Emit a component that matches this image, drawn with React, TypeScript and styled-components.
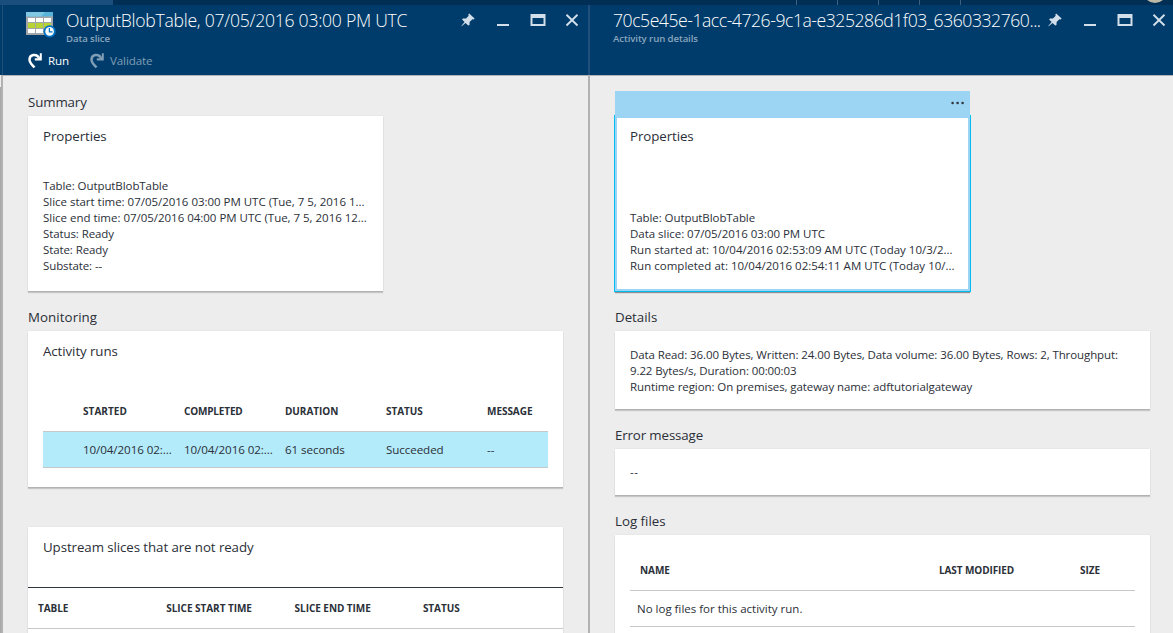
import React from 'react';
import styled, { createGlobalStyle } from 'styled-components';

const GlobalStyle = createGlobalStyle`
  * { box-sizing: border-box; }
  body {
    margin: 0;
    overflow: hidden;
    background: #ededed;
    color: #2b2f38;
    font-family: 'Open Sans', 'Noto Sans', sans-serif;
  }
`;

const Page = styled.div`
  width: 1173px;
  height: 633px;
  display: flex;
  flex-direction: column;
  overflow: hidden;
`;

const TopStrip = styled.div`
  flex: none;
  height: 5px;
  display: flex;
  background: #002e55;
  overflow: hidden;
`;
const StripActive = styled.div`
  flex: none;
  width: 113px;
  margin-right: 683px;
  background: #1a4f7d;
`;
const StripSlot = styled.div`
  flex: none;
  width: 41px;
  border-left: 1px solid #3f6180;
`;
const Avatar = styled.div`
  width: 24px;
  height: 24px;
  flex: none;
  margin: -21px 0 0 142px;
  border-radius: 50%;
  background: #bcbaa6;
`;

const Blades = styled.div`
  flex: 1;
  display: flex;
  min-height: 0;
`;

const PreviousEdge = styled.div`
  flex: none;
  width: 3px;
  display: flex;
  flex-direction: column;
`;
const EdgeHead = styled.div`
  height: 70px;
  background: #003c6b;
  border-right: 1px solid #1f5079;
`;
const EdgeGap = styled.div`
  height: 12px;
  background: #ededed;
  border-right: 2px solid #b2b2b2;
`;
const EdgeTrack = styled.div`
  flex: 1;
  background: #a9a9a9;
  border-right: 2px solid #b2b2b2;
`;

const BladeFrame = styled.section`
  flex: none;
  width: 587px;
  display: flex;
  flex-direction: column;
`;
const Header = styled.header`
  flex: none;
  height: 70px;
  display: flex;
  flex-direction: column;
  background: #003c6b;
  border-right: 2px solid #1f4f7a;
`;
const TitleBar = styled.div`
  display: flex;
  height: 43px;
  padding-left: 23px;
`;
const SliceIcon = styled.svg`
  flex: none;
  width: 30px;
  height: 27px;
  margin: 7px 10px 0 0;
`;
const Titles = styled.div<{ $width: number }>`
  flex: none;
  width: ${p => p.$width}px;
  white-space: nowrap;
`;
const Title = styled.h1<{ $track: number }>`
  margin: 2px 0 0;
  height: 26px;
  font-size: 17.6px;
  line-height: 26px;
  font-weight: 350;
  letter-spacing: ${p => p.$track}px;
  color: #fff;
`;
const Subtitle = styled.div`
  font-size: 9.6px;
  line-height: 12px;
  font-weight: 600;
  letter-spacing: -0.08px;
  color: #8ba6be;
`;
const Controls = styled.svg`
  flex: none;
  width: 118px;
  height: 14px;
  margin-top: 8px;
`;
const Commands = styled.div`
  display: flex;
  padding-left: 24px;
`;
const Command = styled.div<{ $disabled?: boolean; $width: number }>`
  width: ${p => p.$width}px;
  display: flex;
  align-items: center;
  gap: 5px;
  height: 25px;
  font-size: 11.6px;
  letter-spacing: -0.12px;
  color: ${p => (p.$disabled ? '#7f9db5' : '#fff')};
`;
const CommandIcon = styled.svg`
  width: 16px;
  height: 17px;
  margin-top: -1px;
`;

const Body = styled.div`
  flex: 1;
  min-height: 0;
  overflow: hidden;
  padding: 15px 0 0 25px;
  border-top: 1px solid #b0b4b8;
  border-right: 2px solid #b2b2b2;
  background: #ededed;
`;
const SectionLabel = styled.h2<{ $track?: number }>`
  margin: 16px 0 4px;
  height: 20px;
  font-size: 13.3px;
  line-height: 20px;
  font-weight: 400;
  letter-spacing: ${p => p.$track ?? 0}px;
  &:first-child { margin-top: 1px; }
`;
const Card = styled.div<{ $width?: number; $height: number }>`
  width: ${p => p.$width ?? 535}px;
  height: ${p => p.$height}px;
  background: #fff;
  box-shadow: 0 1px 0 #b2b2b2, 0 2px 1px rgba(0, 0, 0, 0.16), 0 0 1px rgba(0, 0, 0, 0.12);
  padding: 0 15px;
  display: flex;
  flex-direction: column;
`;
const SpacedCard = styled(Card)`
  margin-top: 40px;
  padding: 0;
`;
const CardTitle = styled.h3<{ $inset?: number; $top?: number }>`
  margin: ${p => p.$top ?? 10}px 0 0 ${p => p.$inset ?? 0}px;
  font-size: 13.3px;
  line-height: 20px;
  font-weight: 400;
  letter-spacing: -0.08px;
`;
const Lines = styled.div<{ $bottom: number }>`
  margin-top: auto;
  padding-bottom: ${p => p.$bottom}px;
`;
const Line = styled.div<{ $track?: number }>`
  height: 16px;
  font-size: 11.5px;
  line-height: 16px;
  white-space: nowrap;
  letter-spacing: ${p => p.$track ?? -0.1}px;
`;

const SelectedBar = styled.div`
  position: relative;
  z-index: 1;
  width: 355px;
  height: 27px;
  display: flex;
  justify-content: flex-end;
  background: #9cd4f3;
`;
const Dots = styled.svg`
  width: 14px;
  height: 4px;
  margin: 10px 5px 0 0;
`;
const SelectedCard = styled(Card)`
  margin-top: -2px;
  padding: 0 13px;
  border: 2px solid #9cd4f3;
  box-shadow: 0 0 0 1px #00bcf2, 0 2px 1px rgba(0, 0, 0, 0.4);
`;

const HeadRow = styled.div<{ $cols: string; $height: number }>`
  flex: none;
  display: grid;
  grid-template-columns: ${p => p.$cols};
  height: ${p => p.$height}px;
  align-items: center;
  border-bottom: 1px solid #c8c8c8;
`;
const HeadCell = styled.div<{ $track?: number }>`
  padding-left: 10px;
  font-size: 10px;
  line-height: 14px;
  font-weight: 700;
  letter-spacing: ${p => p.$track ?? -0.05}px;
  white-space: nowrap;
`;
const SelectedRow = styled.div<{ $cols: string }>`
  flex: none;
  display: grid;
  grid-template-columns: ${p => p.$cols};
  height: 36px;
  align-items: center;
  background: #b3ebfb;
  border-bottom: 1px solid #c3c9cb;
`;
const Cell = styled.div`
  padding-left: 10px;
  font-size: 11.6px;
  line-height: 16px;
  letter-spacing: -0.08px;
  white-space: nowrap;
`;
const RunsTable = styled.div`
  margin-top: 30px;
`;
const UpstreamTable = styled.div`
  margin-top: 30px;
  border-top: 1px solid #32363f;
`;
const LogTable = styled.div`
  margin-top: 15px;
`;
const EmptyRow = styled.div`
  height: 36px;
  padding-left: 7px;
  border-bottom: 1px solid #c8c8c8;
  font-size: 11.5px;
  line-height: 36px;
`;

const runCols = '30px repeat(4, 101px) 1fr';
const upstreamCols = 'repeat(3, 128.3px) 1fr';
const logCols = '299px 141px 1fr';

const WindowControls = () => (
  <Controls viewBox="0 0 118 14">
    <g fill="#d2dfea">
      <path d="M8.2 1 L13.6 6 L12.6 7 L11.4 6.6 L8.6 9.3 L8.5 12.4 L7.3 13 L4.6 10.4 L0.6 13.6 L0.3 13.3 L3.6 9.4 L1.1 6.9 L1.9 5.9 L5 5.9 L7.7 3.2 L7.3 1.9 Z" transform="translate(0 -0.4)" />
      <rect x="36" y="11" width="12" height="2" />
      <path d="M69.5 1 h15 v12 h-15 z M71.5 5 v6 h11 v-6 z" fillRule="evenodd" />
    </g>
    <path d="M105.5 1.7 L116.5 12.5 M116.5 1.7 L105.5 12.5" stroke="#d2dfea" strokeWidth="1.9" fill="none" />
  </Controls>
);

const RedoIcon = () => (
  <CommandIcon viewBox="0 0 16 17">
    <path d="M11.8 5.6 C9.2 1.4 2.7 2.4 2.5 7.6 C2.4 10.7 4.6 12.2 7.6 15.4" fill="none" stroke="currentColor" strokeWidth="2.5" />
    <path d="M14.8 1.2 V8.4 H7.8 V6.2 H11 L12.8 4.4 V1.2 Z" fill="currentColor" />
  </CommandIcon>
);

export default function App() {
  return (
    <Page>
      <GlobalStyle />
      <TopStrip>
        <StripActive />
        <StripSlot /><StripSlot /><StripSlot /><StripSlot /><StripSlot />
        <Avatar />
      </TopStrip>
      <Blades>
        <PreviousEdge>
          <EdgeHead />
          <EdgeGap />
          <EdgeTrack />
        </PreviousEdge>

        <BladeFrame>
          <Header>
            <TitleBar>
              <SliceIcon viewBox="0 0 30 27">
                <rect x="0" y="0" width="27" height="23" rx="0.6" fill="#a3a6a8" />
                <rect x="0" y="0" width="27" height="4.4" fill="#59b4d9" />
                <path d="M0 0 H19 L15 4.4 H0 Z" fill="#7fc7e3" />
                <g fill="#fff">
                  <rect x="2" y="6" width="7" height="4" /><rect x="10" y="6" width="7" height="4" /><rect x="18" y="6" width="7" height="4" />
                  <rect x="2" y="17" width="7" height="4" /><rect x="10" y="17" width="7" height="4" />
                </g>
                <g fill="#b8d432">
                  <rect x="2" y="11" width="7" height="5" /><rect x="10" y="11" width="7" height="5" /><rect x="18" y="11" width="7" height="5" />
                </g>
                <circle cx="23.6" cy="19.4" r="6.1" fill="#0072c6" />
                <circle cx="23.6" cy="19.4" r="4.3" fill="#fff" />
                <path d="M23.4 16 V19.8 H26.6" fill="none" stroke="#0072c6" strokeWidth="1.3" />
              </SliceIcon>
              <Titles $width={395}>
                <Title $track={-0.27}>OutputBlobTable, 07/05/2016 03:00 PM UTC</Title>
                <Subtitle>Data slice</Subtitle>
              </Titles>
              <WindowControls />
            </TitleBar>
            <Commands>
              <Command $width={62}><RedoIcon />Run</Command>
              <Command $width={80} $disabled><RedoIcon />Validate</Command>
            </Commands>
          </Header>
          <Body>
            <SectionLabel $track={-0.12}>Summary</SectionLabel>
            <Card $width={355} $height={175}>
              <CardTitle>Properties</CardTitle>
              <Lines $bottom={17}>
                <Line $track={-0.08}>Table: OutputBlobTable</Line>
                <Line $track={-0.02}>Slice start time: 07/05/2016 03:00 PM UTC (Tue, 7 5, 2016 1...</Line>
                <Line $track={-0.02}>Slice end time: 07/05/2016 04:00 PM UTC (Tue, 7 5, 2016 12...</Line>
                <Line>Status: Ready</Line>
                <Line>State: Ready</Line>
                <Line>Substate: --</Line>
              </Lines>
            </Card>
            <SectionLabel $track={0.07}>Monitoring</SectionLabel>
            <Card $height={156}>
              <CardTitle>Activity runs</CardTitle>
              <RunsTable>
                <HeadRow $cols={runCols} $height={41}>
                  <span />
                  <HeadCell $track={0.05}>STARTED</HeadCell>
                  <HeadCell $track={-0.17}>COMPLETED</HeadCell>
                  <HeadCell>DURATION</HeadCell>
                  <HeadCell>STATUS</HeadCell>
                  <HeadCell>MESSAGE</HeadCell>
                </HeadRow>
                <SelectedRow $cols={runCols}>
                  <span />
                  <Cell>10/04/2016 02:...</Cell>
                  <Cell>10/04/2016 02:...</Cell>
                  <Cell>61 seconds</Cell>
                  <Cell>Succeeded</Cell>
                  <Cell>--</Cell>
                </SelectedRow>
              </RunsTable>
            </Card>
            <SpacedCard $height={160}>
              <CardTitle $inset={15}>Upstream slices that are not ready</CardTitle>
              <UpstreamTable>
                <HeadRow $cols={upstreamCols} $height={41}>
                  <HeadCell>TABLE</HeadCell>
                  <HeadCell>SLICE START TIME</HeadCell>
                  <HeadCell>SLICE END TIME</HeadCell>
                  <HeadCell>STATUS</HeadCell>
                </HeadRow>
              </UpstreamTable>
            </SpacedCard>
          </Body>
        </BladeFrame>

        <BladeFrame>
          <Header>
            <TitleBar>
              <Titles $width={435}>
                <Title $track={-0.46}>70c5e45e-1acc-4726-9c1a-e325286d1f03_6360332760...</Title>
                <Subtitle>Activity run details</Subtitle>
              </Titles>
              <WindowControls />
            </TitleBar>
          </Header>
          <Body>
            <SelectedBar>
              <Dots viewBox="0 0 14 4">
                <g fill="#32363f"><circle cx="1.6" cy="2" r="1.3" /><circle cx="6.6" cy="2" r="1.3" /><circle cx="11.6" cy="2" r="1.3" /></g>
              </Dots>
            </SelectedBar>
            <SelectedCard $width={355} $height={175}>
              <CardTitle $top={8}>Properties</CardTitle>
              <Lines $bottom={15}>
                <Line $track={-0.08}>Table: OutputBlobTable</Line>
                <Line $track={-0.03}>Data slice: 07/05/2016 03:00 PM UTC</Line>
                <Line $track={0}>Run started at: 10/04/2016 02:53:09 AM UTC (Today 10/3/2...</Line>
                <Line $track={0.01}>Run completed at: 10/04/2016 02:54:11 AM UTC (Today 10/...</Line>
              </Lines>
            </SelectedCard>
            <SectionLabel>Details</SectionLabel>
            <Card $height={78}>
              <Lines $bottom={14}>
                <Line $track={-0.1}>Data Read: 36.00 Bytes, Written: 24.00 Bytes, Data volume: 36.00 Bytes, Rows: 2, Throughput:</Line>
                <Line $track={-0.1}>9.22 Bytes/s, Duration: 00:00:03</Line>
                <Line $track={-0.08}>Runtime region: On premises, gateway name: adftutorialgateway</Line>
              </Lines>
            </Card>
            <SectionLabel $track={-0.13}>Error message</SectionLabel>
            <Card $height={46}>
              <Lines $bottom={15}>
                <Line $track={0.5}>--</Line>
              </Lines>
            </Card>
            <SectionLabel>Log files</SectionLabel>
            <Card $height={140}>
              <LogTable>
                <HeadRow $cols={logCols} $height={41}>
                  <HeadCell>NAME</HeadCell>
                  <HeadCell $track={-0.1}>LAST MODIFIED</HeadCell>
                  <HeadCell>SIZE</HeadCell>
                </HeadRow>
                <EmptyRow>No log files for this activity run.</EmptyRow>
              </LogTable>
            </Card>
          </Body>
        </BladeFrame>
      </Blades>
    </Page>
  );
}
